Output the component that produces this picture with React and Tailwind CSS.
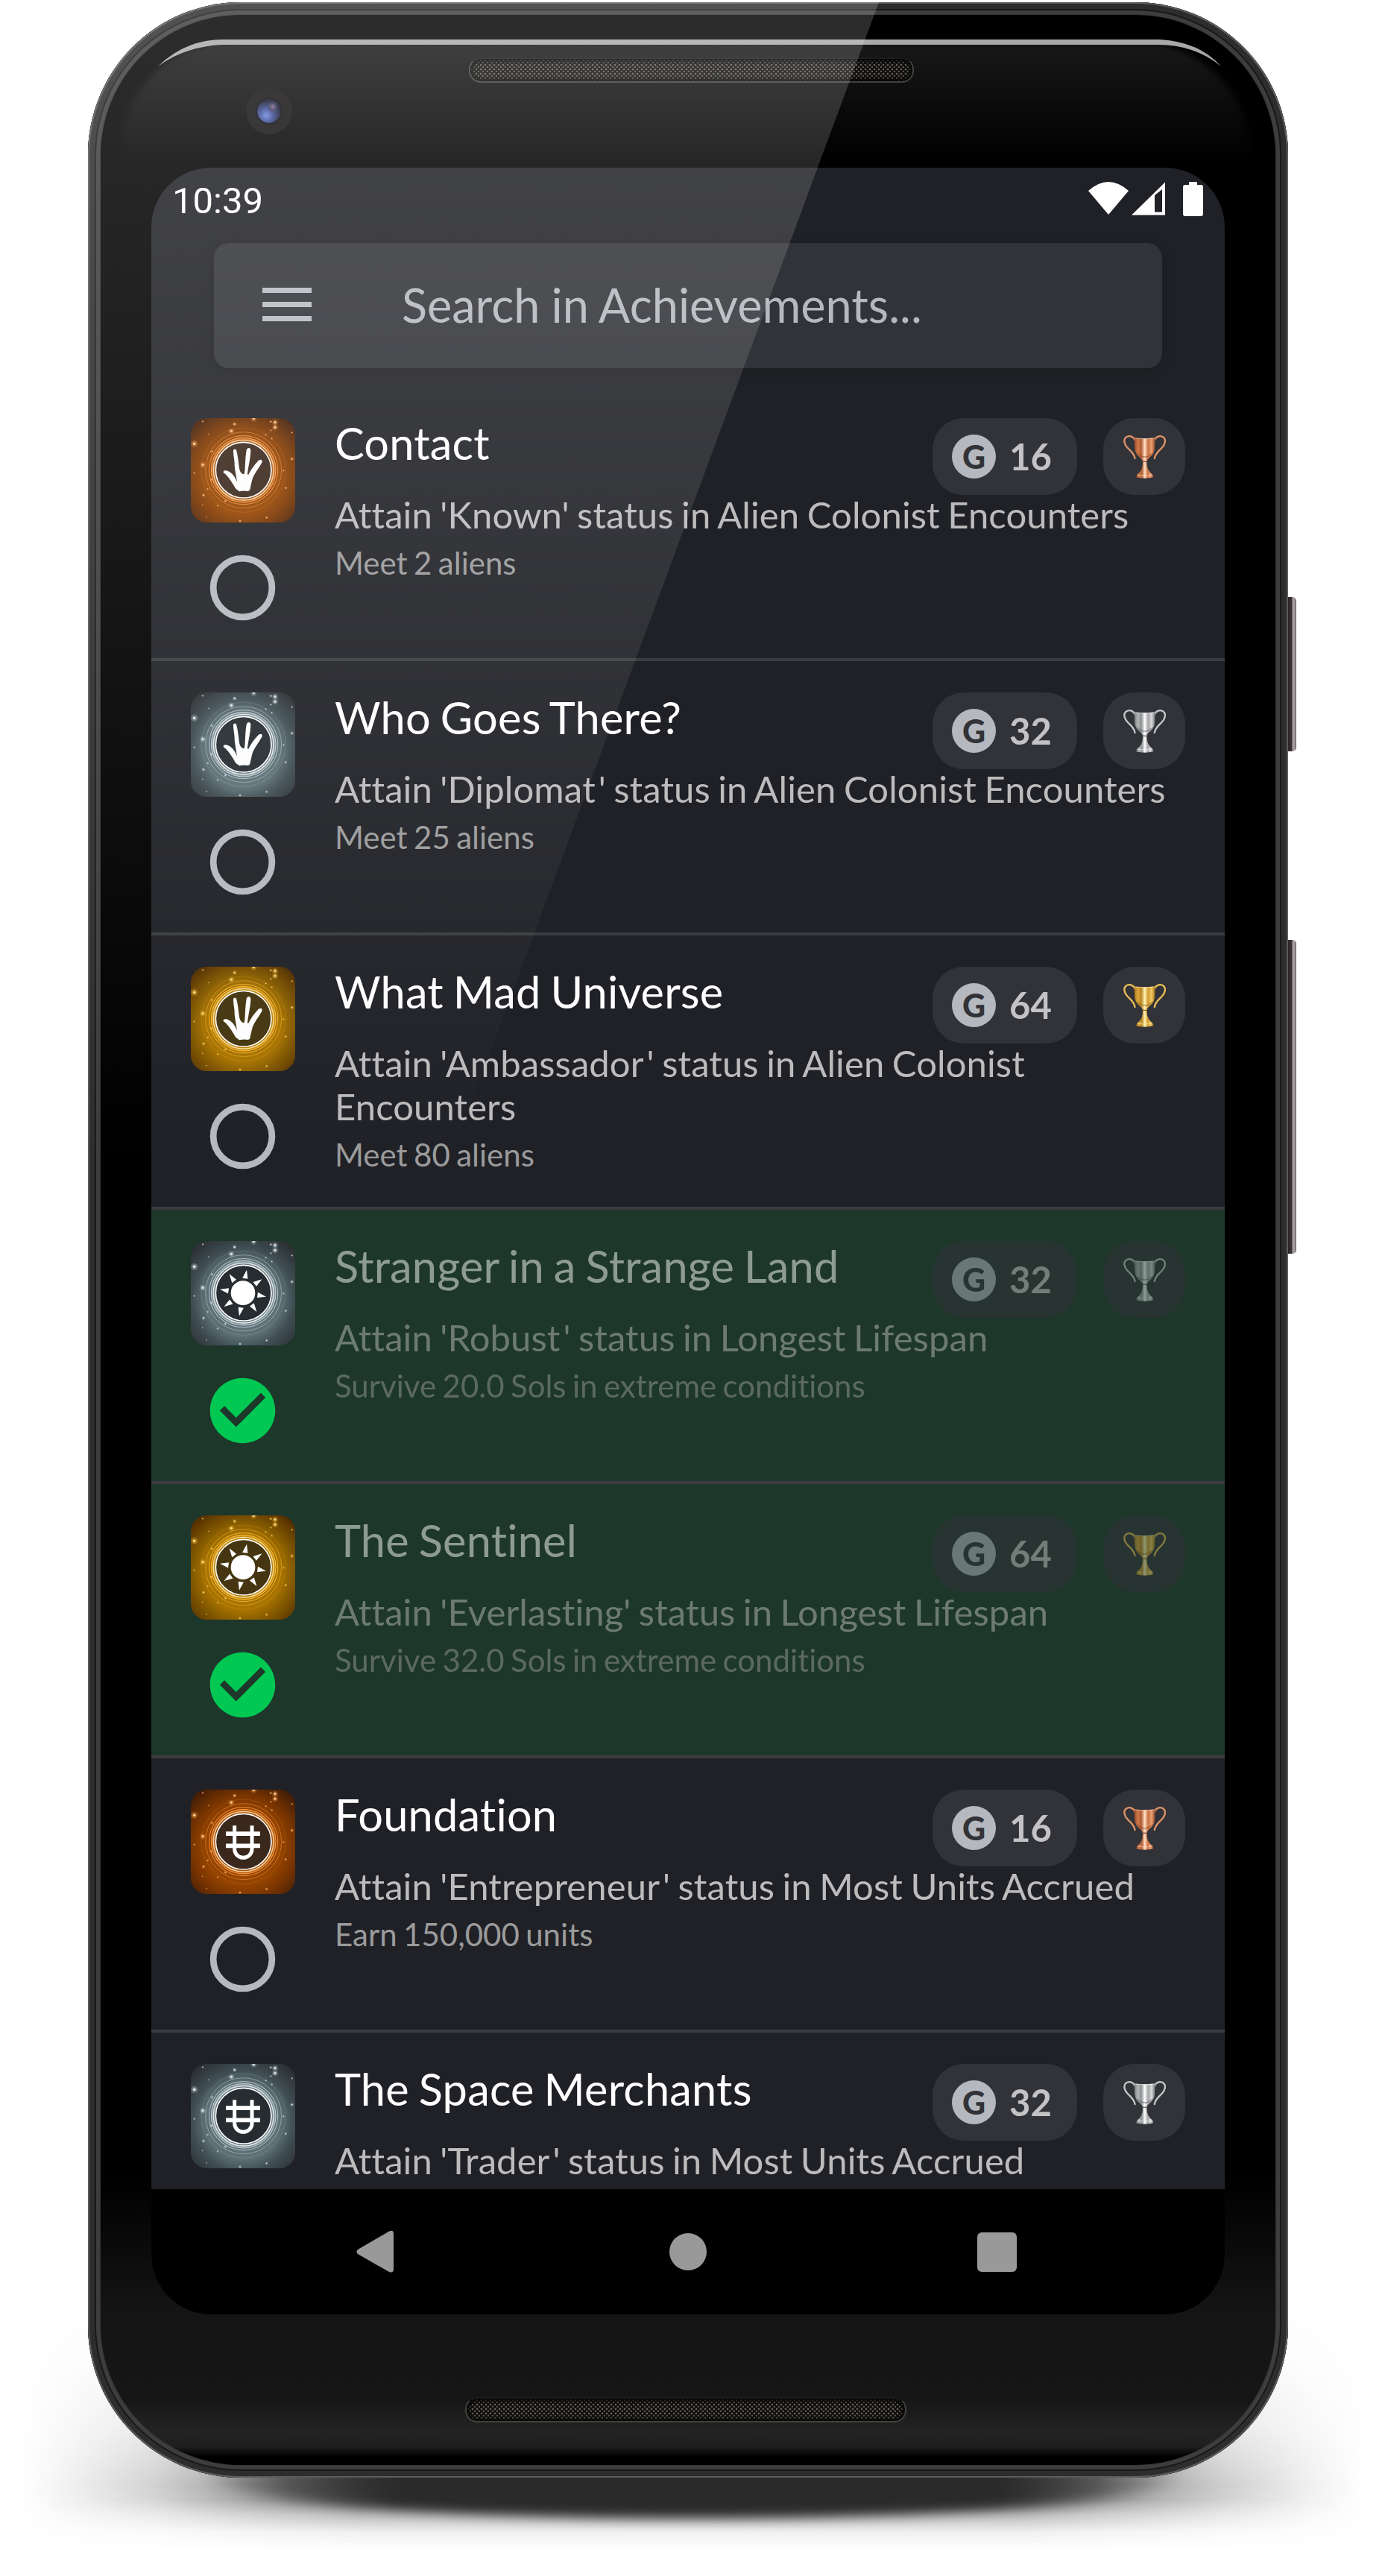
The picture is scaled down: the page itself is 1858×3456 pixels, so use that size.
const TONES = {
  bronze: {
    center: '#954400', mid: '#7a3500', edge: '#351708', disc: '#3a281d', ring: '#ff9a44', hot: '#fff0c8',
    cup: ['#96492a', '#d07a4a', '#b05c36', '#ffe0c4', '#c96f42', '#eba072', '#8e4526'], handle: '#dd9468', dark: '#7a3518',
  },
  silver: {
    center: '#5e7076', mid: '#3f4d52', edge: '#26282a', disc: '#262c30', ring: '#c4d2d8', hot: '#ffffff',
    cup: ['#77797b', '#b4b6b8', '#8d8f91', '#ffffff', '#a3a5a7', '#d8dadc', '#707274'], handle: '#c3c5c7', dark: '#4a4c4e',
  },
  gold: {
    center: '#a87400', mid: '#825800', edge: '#472500', disc: '#453611', ring: '#ffbc34', hot: '#fff3c0',
    cup: ['#a8761a', '#dca73c', '#bb8624', '#fff4b4', '#d39a30', '#f2cc64', '#9e6c14'], handle: '#e8bd58', dark: '#7a4c08',
  },
};

const ACHIEVEMENTS = [
  { title: 'Contact', status: 'Known', group: 'Alien Colonist Encounters', note: 'Meet 2 aliens', score: 16, tone: 'bronze', glyph: 'hand' },
  { title: 'Who Goes There?', status: 'Diplomat', group: 'Alien Colonist Encounters', note: 'Meet 25 aliens', score: 32, tone: 'silver', glyph: 'hand' },
  { title: 'What Mad Universe', status: 'Ambassador', group: 'Alien Colonist Encounters', note: 'Meet 80 aliens', score: 64, tone: 'gold', glyph: 'hand' },
  { title: 'Stranger in a Strange Land', status: 'Robust', group: 'Longest Lifespan', note: 'Survive 20.0 Sols in extreme conditions', score: 32, tone: 'silver', glyph: 'sun', done: true },
  { title: 'The Sentinel', status: 'Everlasting', group: 'Longest Lifespan', note: 'Survive 32.0 Sols in extreme conditions', score: 64, tone: 'gold', glyph: 'sun', done: true },
  { title: 'Foundation', status: 'Entrepreneur', group: 'Most Units Accrued', note: 'Earn 150,000 units', score: 16, tone: 'bronze', glyph: 'units' },
  { title: 'The Space Merchants', status: 'Trader', group: 'Most Units Accrued', score: 32, tone: 'silver', glyph: 'units' },
];

const SPARKS = [
  [271, 20, 5], [194, 42, 3.5], [181, 70, 5], [340, 32, 2.5], [357, 35, 5], [357, 55, 5], [32, 121, 6],
  [66, 206, 5], [425, 182, 3], [103, 152, 2.5], [69, 328, 3], [100, 266, 2.5], [400, 299, 2.5], [86, 303, 2],
  [391, 229, 2], [32, 239, 2], [323, 418, 2.5], [216, 432, 2.5], [126, 370, 2], [157, 351, 2.5], [340, 67, 2],
  [344, 100, 2], [320, 85, 2], [66, 31, 2], [90, 82, 1.5], [81, 416, 1.5], [65, 367, 1.5], [425, 76, 2],
];

function Glyph({ name }) {
  if (name === 'hand') {
    return (
      <path
        fill="#fdfdfd"
        d="M203 275C196 250 178 233 161 229C148 227 145 236 154 241C168 252 180 272 190 287C196 300 202 306 208 308Q212 314 217 312Q236 309 248 312C254 311 257 306 257 300L264 270C269 246 290 222 304 197C308 186 299 182 290 189C272 207 258 228 250 245C246 247 246 243 246 239C250 210 258 180 259 150C260 135 245 135 242 147C236 180 238 214 234 241L229 244C218 240 213 228 211 205C209 185 206 165 202 150C198 138 187 142 189 155C190 175 195 190 194 210C196 235 203 255 203 275Z"
      />
    );
  }
  if (name === 'sun') {
    return (
      <g fill="#fff">
        <circle cx="228" cy="227" r="49" />
        {[0, 45, 90, 135, 180, 225, 270, 315].map((a) => (
          <path key={a} d="M217 168L239 168L230 133Z" transform={`rotate(${a + 8} 228 227)`} />
        ))}
      </g>
    );
  }
  return (
    <g fill="none" stroke="#fff" strokeWidth="15">
      <path d="M159 195.500H297M159 244H297" strokeWidth="17" />
      <path d="M194 163V257A35 35 0 0 0 264 257V163" />
    </g>
  );
}

function Emblem({ tone, glyph, id }) {
  const t = TONES[tone];
  return (
    <svg viewBox="18 18 420 420" className="block size-[140px] rounded-[21px]">
      <defs>
        <radialGradient id={`bg${id}`} cx="0.5" cy="0.55" r="0.72">
          <stop offset="0" stopColor={t.center} />
          <stop offset="0.5" stopColor={t.center} />
          <stop offset="0.68" stopColor={t.mid} />
          <stop offset="1" stopColor={t.edge} />
        </radialGradient>
        <radialGradient id={`sp${id}`}>
          <stop offset="0" stopColor={t.ring} stopOpacity="0.8" />
          <stop offset="1" stopColor={t.ring} stopOpacity="0" />
        </radialGradient>
      </defs>
      <rect x="18" y="18" width="420" height="420" fill={`url(#bg${id})`} />
      {SPARKS.map(([x, y, r]) => (
        <g key={`${x}-${y}`}>
          <circle cx={x} cy={y} r={r * 2.8} fill={`url(#sp${id})`} />
          <circle cx={x} cy={y} r={r * 0.8} fill={t.hot} opacity="0.8" />
        </g>
      ))}
      <g fill="none" stroke={t.ring}>
        <circle cx="230" cy="227" r="170" strokeWidth="3" opacity="0.18" />
        <circle cx="230" cy="227" r="153" strokeWidth="3" opacity="0.5" />
        <circle cx="230" cy="227" r="138" strokeWidth="3.500" opacity="0.7" />
        <circle cx="230" cy="227" r="124" strokeWidth="14" opacity="0.4" />
        <circle cx="230" cy="227" r="130" strokeWidth="3" />
        <circle cx="230" cy="227" r="121" strokeWidth="4" stroke={t.hot} opacity="0.8" />
      </g>
      <circle cx="230" cy="227" r="112" fill={t.disc} stroke="#fff" strokeWidth="5" />
      <Glyph name={glyph} />
    </svg>
  );
}

function Trophy({ tone, id }) {
  const t = TONES[tone];
  return (
    <svg viewBox="711 25 170 174" className="block h-[58px] w-[57px]">
      <defs>
        <linearGradient id={`cup${id}`}>
          {t.cup.map((c, i) => (
            <stop key={i} offset={i / 6} stopColor={c} />
          ))}
        </linearGradient>
      </defs>
      <g fill="none" stroke={t.handle} strokeWidth="7" strokeLinecap="round">
        <path d="M758 46C752 28 734 25 723 32C708 42 715 62 728 76C742 91 754 98 757 118" />
        <path d="M835 46C841 28 859 25 870 32C885 42 878 62 865 76C851 91 839 98 836 118" />
      </g>
      <path fill={`url(#cup${id})`} d="M755 35Q796 41 838 35C837 60 840 82 831 98C822 112 808 118 804 130H789C785 118 771 112 762 98C753 82 756 60 755 35Z" />
      <path fill={`url(#cup${id})`} d="M788 127H805Q803 150 811 164Q816 175 828 182L832 194Q796 202 762 194L766 182Q778 175 783 164Q790 150 788 127Z" />
      <path stroke={t.cup[3]} strokeWidth="3" opacity="0.6" d="M758 37Q796 42 835 37M768 184Q796 191 826 184" fill="none" />
      <path stroke={t.dark} strokeWidth="4" opacity="0.8" d="M789 131H804" />
      <path stroke={t.dark} strokeWidth="4" opacity="0.5" fill="none" d="M764 96Q796 128 830 96" />
    </svg>
  );
}

function StatusMark({ done }) {
  return (
    <svg viewBox="0 0 24 24" className="mr-px block size-[105px]">
      {done ? (
        <path fill="#00c853" d="M12 2C6.500 2 2 6.500 2 12S6.500 22 12 22 22 17.500 22 12 17.500 2 12 2M10 17L5 12L6.410 10.590L10 14.170L17.590 6.580L19 8L10 17Z" />
      ) : (
        <circle cx="12" cy="12" r="9" fill="none" stroke="#b5b8be" strokeWidth="2" />
      )}
    </svg>
  );
}

// Opens up the tight kerning between a final "r" or "t" and the closing quote.
function Quoted({ word }) {
  const last = word.slice(-1);
  if (!'rt'.includes(last)) return <>'{word}'</>;
  return (
    <>
      '{word.slice(0, -1)}
      <span className="tracking-[4px]">{last}</span>'
    </>
  );
}

function Row({ item, id }) {
  const dim = item.done ? 'opacity-50' : '';
  return (
    <li className={`flex h-[368px] shrink-0 gap-[53px] border-b-4 border-[#3b3c40] px-[53px] pt-[42px] ${item.done ? 'bg-[#1d372b]' : ''}`}>
      <div className="flex w-[140px] shrink-0 flex-col items-center gap-[35px]">
        <Emblem tone={item.tone} glyph={item.glyph} id={id} />
        <StatusMark done={item.done} />
      </div>
      <div className={`min-w-0 flex-1 ${dim}`}>
        <div className="flex h-[100px] items-start justify-between">
          <h2 className="-mt-[2px] whitespace-nowrap text-[59.500px] leading-[71px] tracking-[0.2px] text-white [word-spacing:-2.5px]">{item.title}</h2>
          <div className="flex gap-[35px]">
            <div className="flex h-[103px] w-[194px] items-center rounded-[42px] bg-[#323338] pl-[26px]">
              <span className="flex size-[59px] items-center justify-center rounded-full bg-[#b5b8be] text-[43px] font-black leading-none text-[#323338]">G</span>
              <span className="ml-[18px] text-[49px] font-bold leading-[59px] text-[#c3c3c5]">{item.score}</span>
            </div>
            <div className="flex h-[103px] w-[110px] items-center justify-center rounded-[42px] bg-[#323338]">
              <Trophy tone={item.tone} id={id} />
            </div>
          </div>
        </div>
        <p className="text-[49px] leading-[58px] tracking-[0.1px] text-[#bcbcbd] [word-spacing:-2.2px]">
          Attain <Quoted word={item.status} /> status in {item.group}
        </p>
        {item.note && <p className="mt-[11px] text-[42px] leading-[50px] text-[#9b9b9c] [word-spacing:-2.3px]">{item.note}</p>}
      </div>
    </li>
  );
}

function StatusBar() {
  return (
    <div className="flex h-[101px] items-start justify-between pl-[28px] pr-[28px] pt-[19px]">
      <span className="pt-px font-[Roboto] text-[49px] leading-[50px] text-white">10:39</span>
      <svg viewBox="0 0 155 46" className="h-[46px] w-[155px]" fill="#fff">
        <path d="M0 12Q27 -12 54 12L27 44Z" />
        <path fillRule="evenodd" d="M58 44.500L103 0.500V44.500ZM89 18V40.500H99V10Z" />
        <path d="M135 0H146V4H151Q154 4 154 7V43Q154 46 151 46H130Q127 46 127 43V7Q127 4 130 4H135Z" />
      </svg>
    </div>
  );
}

function SearchBar() {
  return (
    <div className="mx-[84px] mb-[25px] flex h-[168px] shrink-0 items-center rounded-[20px] bg-[#323338] pb-[3px] pl-[65px] shadow-[0_3px_14px_rgba(0,0,0,0.18)]">
      <svg viewBox="0 0 66 45" className="h-[45px] w-[66px]" fill="#b8bbc1">
        <path d="M0 0H66V7H0ZM0 19H66V26H0ZM0 38H66V45H0Z" />
      </svg>
      <span className="ml-[121px] whitespace-nowrap text-[63px] leading-[76px] text-[#b5b8be] [word-spacing:-1px]">Search in Achievements...</span>
    </div>
  );
}

function NavBar() {
  return (
    <nav className="flex h-[168px] shrink-0 items-center justify-between bg-black px-[275px]">
      <svg viewBox="0 0 57 58" className="h-[58px] w-[57px]" fill="#999">
        <path d="M2 26L44 1.500Q50 -1 50 5V52Q50 58 44 56L2 32Q-1 29 2 26Z" />
      </svg>
      <span className="size-[50px] rounded-full bg-[#999]" />
      <span className="mr-[4px] size-[53px] rounded-[6px] bg-[#999]" />
    </nav>
  );
}

function Grille({ className }) {
  return (
    <div
      className={`rounded-[16px] border-2 border-[#41413f] border-t-[#1c1c1c] bg-[#0f0e0c] bg-[radial-gradient(circle_at_2px_2px,#6f6b62_0,#6f6b62_0.6px,transparent_1.8px),radial-gradient(circle_at_5px_5px,#625e56_0,#625e56_0.6px,transparent_1.8px)] bg-[length:6px_6px] shadow-[inset_0_0_4px_3px_#030303] ${className}`}
    />
  );
}

function SideKey({ className }) {
  return <div className={`absolute w-[11px] rounded-r-[5px] bg-[linear-gradient(90deg,#2b2427_0,#3d3438_45%,#a49c9f_55%,#a49c9f_80%,#5d5558_100%)] ${className}`} />;
}

export default function App() {
  return (
    <div className="relative h-[3456px] w-[1858px] overflow-hidden bg-white font-[Lato,sans-serif] [font-variant-ligatures:none]">
      <div className="absolute left-[30px] top-[3090px] h-[330px] w-[1800px] bg-[linear-gradient(90deg,rgba(42,42,42,0)_0%,rgba(42,42,42,0.08)_4%,rgba(42,42,42,0.22)_10%,rgba(42,42,42,0.5)_18%,rgba(42,42,42,0.7)_25%,rgba(42,42,42,0.7)_75%,rgba(42,42,42,0.5)_81%,rgba(42,42,42,0.22)_90%,rgba(42,42,42,0.07)_96%,rgba(42,42,42,0)_100%)] [mask-image:linear-gradient(180deg,transparent_0,rgba(0,0,0,0.15)_25%,rgba(0,0,0,0.45)_50%,#000_74%,rgba(0,0,0,0.9)_80%,rgba(0,0,0,0.45)_86%,rgba(0,0,0,0.1)_93%,transparent_100%)]" />
      <div className="absolute left-[270px] top-[3250px] h-[128px] w-[1320px] rounded-[50%_50%_50%_50%/0%_0%_45%_45%] bg-[linear-gradient(90deg,rgba(42,42,42,0)_0,rgba(42,42,42,0.55)_9%,#2a2a2a_20%,#2a2a2a_81%,rgba(42,42,42,0.55)_91%,rgba(42,42,42,0)_100%)] blur-[8px]" />
      <SideKey className="left-[1728px] top-[801px] h-[207px]" />
      <SideKey className="left-[1728px] top-[1261px] h-[421px]" />

      <div className="relative ml-[118px] mt-[3px] h-[3321px] w-[1610px] overflow-hidden rounded-[205px] bg-[#333] p-[17px] shadow-[inset_0_0_0_2px_#5c5c5c,inset_0_0_0_9px_#2d2d2d,inset_0_0_0_11px_#191919,inset_0_0_0_16px_#3d3d3d]">
        <div className="flex h-full flex-col overflow-hidden rounded-[188px] bg-[linear-gradient(180deg,#000_0,#000_2900px,#141414_3080px,#161616_3200px,#232323_3240px,#1e1e1e_3262px,#000_3276px)]">
          <div className="relative h-[205px] shrink-0">
            <div className="absolute bottom-[10px] left-[26px] right-[34px] top-[36px] rounded-t-[150px] bg-[linear-gradient(180deg,#181818,#000)] blur-[4px]" />
            <svg viewBox="0 0 1576 205" className="absolute inset-0 h-[205px] w-[1576px]">
              <path fill="#a8a8a8" d="M77 69Q114 33 164 33H1421Q1474 36 1503 69Q1468 40 1418 40H164Q114 42 77 69Z" />
            </svg>
            <div className="absolute left-[195px] top-[98px] flex size-[62px] items-center justify-center rounded-full bg-[#141213]">
              <div className="size-[36px] rounded-full border-2 border-[#0a0a10] bg-[radial-gradient(circle_at_65%_32%,#8a6a9a_0,#3a3a5a_14%,transparent_26%),radial-gradient(circle_at_38%_68%,#6a86dc_0,#3a4a90_32%,#141626_68%)]" />
            </div>
            <Grille className="relative ml-[494px] translate-y-[57px] h-[34px] w-[597px]" />
          </div>

          <main className="ml-[68px] flex h-[2880px] w-[1440px] shrink-0 flex-col overflow-hidden rounded-[80px] bg-[#202126]">
            <StatusBar />
            <SearchBar />
            <ul className="flex min-h-0 flex-1 flex-col overflow-hidden">
              {ACHIEVEMENTS.map((item, i) => (
                <Row key={item.title} item={item} id={i} />
              ))}
            </ul>
            <NavBar />
          </main>

          <Grille className="ml-[489px] mt-[111px] h-[34px] w-[592px] shrink-0" />
        </div>
        <div className="pointer-events-none absolute inset-0 bg-[linear-gradient(180deg,rgba(255,255,255,0.178)_0,rgba(255,255,255,0)_1560px)] [clip-path:polygon(0_0,1061px_0,481px_1567px,0_1567px)]" />
      </div>
    </div>
  );
}
